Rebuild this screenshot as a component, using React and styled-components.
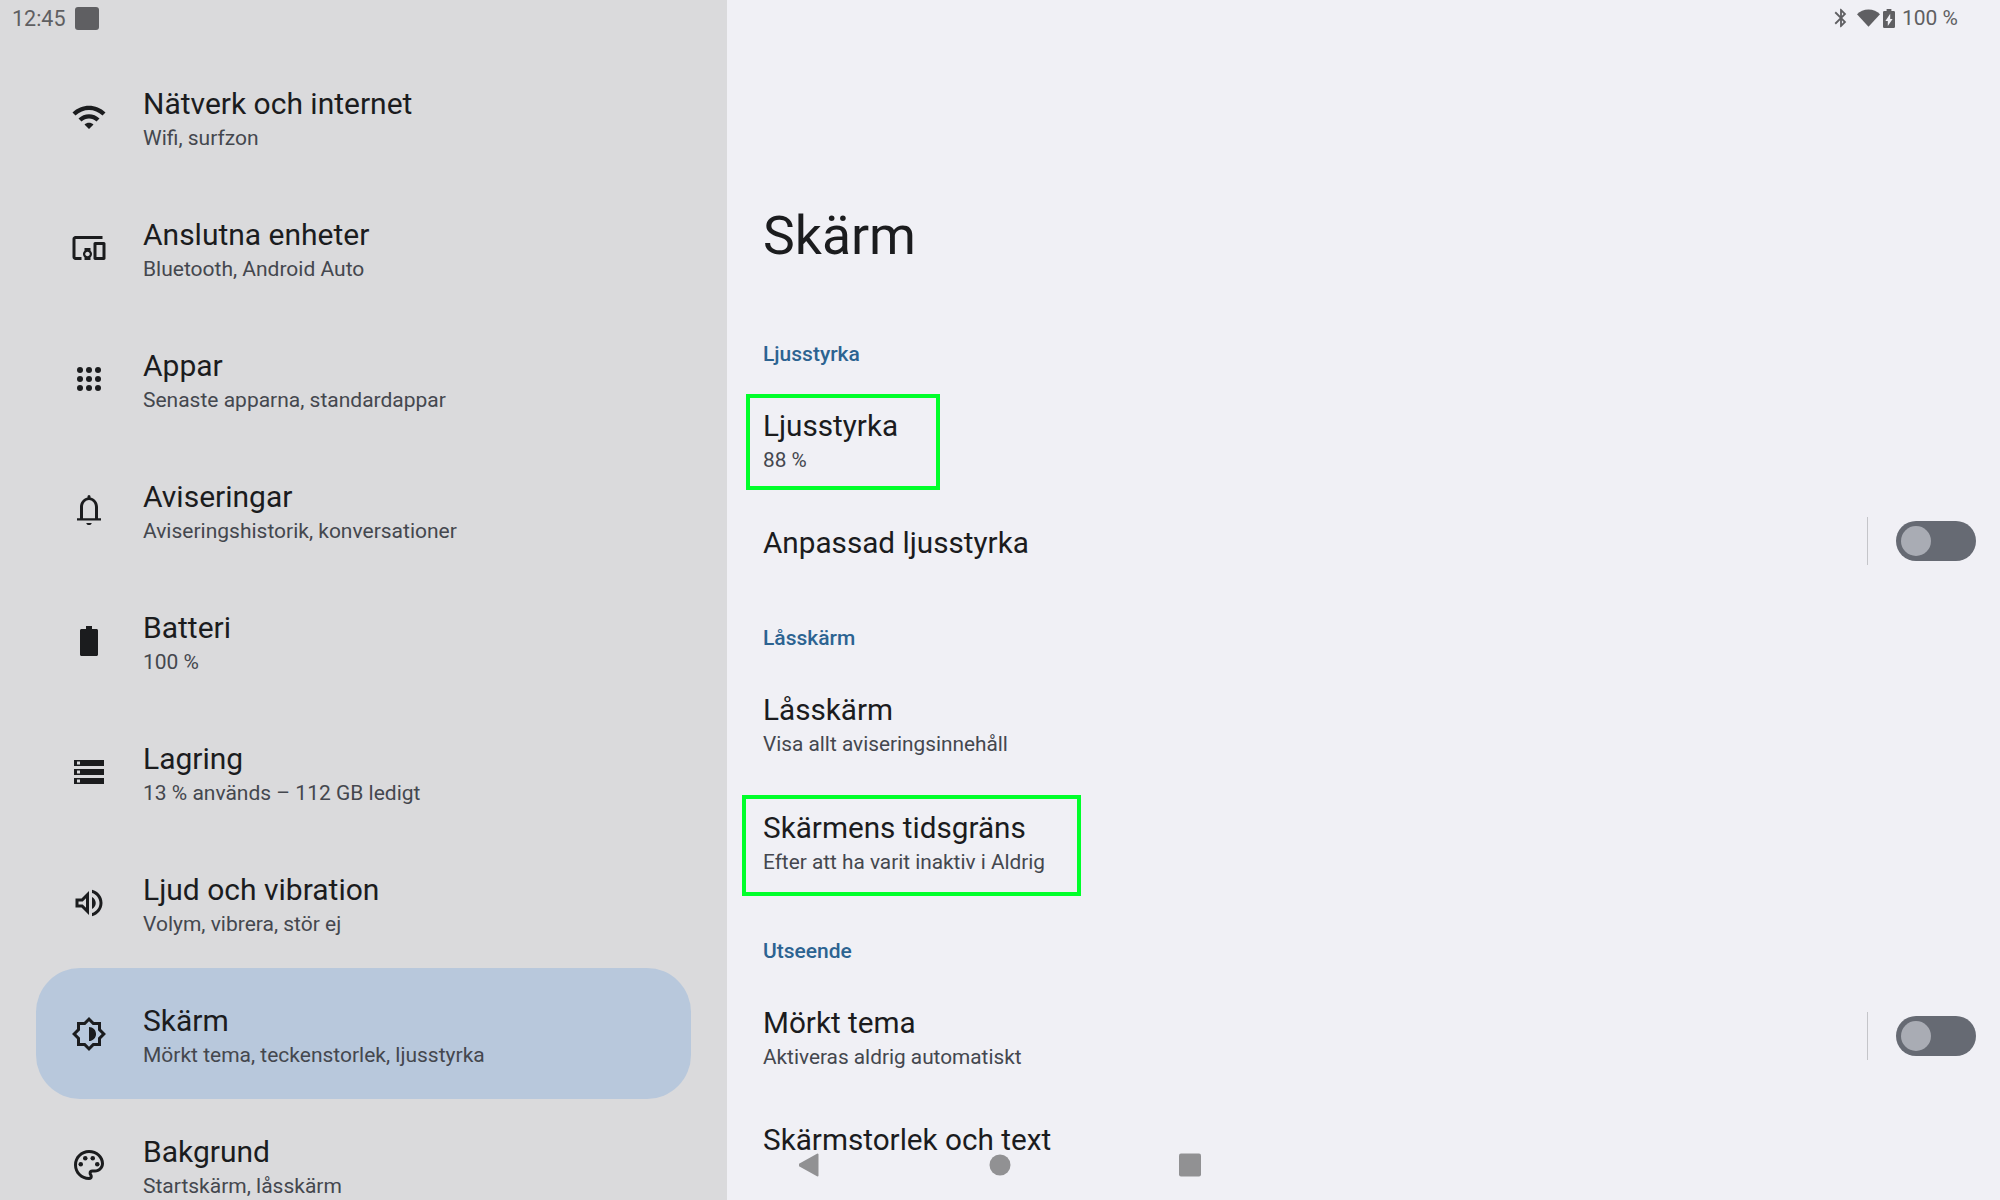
import React from 'react';
import styled, { createGlobalStyle } from 'styled-components';

const GlobalStyle = createGlobalStyle`
  html, body { margin: 0; padding: 0; background: #f0f0f5; }
  body { font-family: Roboto, "Liberation Sans", sans-serif; }
`;

const Screen = styled.div`
  position: relative;
  display: flex;
  width: 2000px;
  height: 1200px;
  overflow: hidden;
`;

const Sidebar = styled.aside`
  display: flex;
  flex-direction: column;
  flex: 0 0 727px;
  height: 1200px;
  overflow: hidden;
  background: #dadadc;
`;

const StatusLeft = styled.div`
  display: flex;
  align-items: center;
  flex: none;
  gap: 9px;
  height: 51px;
  padding: 0 0 15px 12px;
  box-sizing: border-box;
  color: #5f5f62;
  font-size: 21.5px;
`;

const Notch = styled.span`
  width: 24px;
  height: 23px;
  border-radius: 3px;
  background: #5f5f62;
`;

const NavList = styled.nav`
  display: flex;
  flex-direction: column;
  flex: none;
  padding: 0 36px;
`;

const NavItem = styled.div`
  display: flex;
  align-items: center;
  gap: 36px;
  flex: 0 0 131px;
  padding-left: 35px;
  border-radius: 44px;
  background: ${(p) => (p.$active ? '#b8c8dc' : 'transparent')};
`;

const Glyph = styled.svg`
  flex: none;
  width: 36px;
  height: 36px;
  fill: #1b1c1e;
`;

const TextBlock = styled.div`
  display: flex;
  flex-direction: column;
`;

const NavText = styled(TextBlock)`
  padding-top: 2px;
`;

const Title = styled.div`
  color: #1b1c1e;
  font-size: 30px;
  line-height: 41px;
`;

const RowTitle = styled(Title)`
  padding-top: ${(p) => (p.$single ? 3 : 0)}px;
  font-size: 29.7px;
`;

const Sub = styled.div`
  color: #44474e;
  font-size: 21px;
  line-height: 28px;
`;

const RowSub = styled(Sub)`
  font-size: 20.8px;
`;

const Pane = styled.main`
  display: flex;
  flex-direction: column;
  flex: 1;
  height: 1200px;
  overflow: hidden;
  background: #f0f0f5;
`;

const StatusRight = styled.div`
  display: flex;
  align-items: center;
  justify-content: flex-end;
  flex: none;
  height: 36px;
  padding-right: 42px;
  color: #5f5f62;
  font-size: 21px;
`;

const StatusIcon = styled.svg`
  flex: none;
  width: ${(p) => p.$w}px;
  height: ${(p) => p.$h}px;
  margin-right: ${(p) => p.$gap}px;
  fill: #5f5f62;
`;

const PageTitle = styled.h1`
  flex: none;
  margin: 164px 0 0;
  padding-left: 36px;
  color: #1b1c1e;
  font-size: 53.5px;
  font-weight: 400;
  line-height: 72px;
`;

const Section = styled.h2`
  flex: none;
  margin: ${(p) => p.$top}px 0 12px;
  padding-left: 36px;
  color: #2c6391;
  font-size: 21px;
  font-weight: 500;
  line-height: 28px;
`;

const Row = styled.div`
  position: relative;
  display: flex;
  align-items: center;
  justify-content: space-between;
  flex: 0 0 ${(p) => p.$height || 118}px;
  padding: 0 24px 0 36px;
`;

const Highlight = styled.div`
  position: absolute;
  top: ${(p) => p.$top}px;
  left: ${(p) => p.$left}px;
  width: ${(p) => p.$width}px;
  height: ${(p) => p.$height}px;
  box-sizing: border-box;
  border: 4px solid #00ff2a;
`;

const SwitchGroup = styled.div`
  display: flex;
  align-items: center;
  gap: 28px;
`;

const Divider = styled.span`
  width: 1px;
  height: 48px;
  background: #c4c5c9;
`;

const Track = styled.span`
  display: flex;
  align-items: center;
  width: 80px;
  height: 40px;
  padding-left: 5px;
  box-sizing: border-box;
  border-radius: 20px;
  background: #666a73;
`;

const Thumb = styled.span`
  width: 30px;
  height: 30px;
  border-radius: 50%;
  background: #a9acb4;
`;

const NavBar = styled.div`
  position: absolute;
  left: 0;
  right: 0;
  bottom: 23px;
  display: flex;
  justify-content: center;
  gap: 168px;
`;

const NavButton = styled.svg`
  width: 22px;
  height: 24px;
  fill: #919193;
`;

const icons = {
  wifi: <path d="M1 9l2 2c4.97-4.97 13.03-4.97 18 0l2-2C16.93 2.93 7.08 2.93 1 9zm8 8l3 3 3-3c-1.65-1.66-4.34-1.66-6 0zm-4-4l2 2c2.76-2.76 7.24-2.76 10 0l2-2C15.14 9.14 8.87 9.14 5 13z" />,
  devices: <path d="M3 6h18V4H3c-1.1 0-2 .9-2 2v12c0 1.1.9 2 2 2h4v-2H3V6zm10 6H9v1.78c-.61.55-1 1.33-1 2.22s.39 1.67 1 2.22V20h4v-1.78c.61-.55 1-1.34 1-2.22s-.39-1.67-1-2.22V12zm-2 5.5c-.83 0-1.5-.67-1.5-1.5s.67-1.5 1.5-1.5 1.5.67 1.5 1.5-.67 1.5-1.5 1.5zM22 8h-6c-.5 0-1 .5-1 1v10c0 .5.5 1 1 1h6c.5 0 1-.5 1-1V9c0-.5-.5-1-1-1zm-1 10h-4v-8h4v8z" />,
  apps: (
    <>
      {[6, 12, 18].map((y) =>
        [6, 12, 18].map((x) => <circle key={`${x}-${y}`} cx={x} cy={y} r="2" />)
      )}
    </>
  ),
  bell: <path fillRule="evenodd" d="M4 19v-1.5h2V10c0-3.1 2-5.6 5-6.4V3a1 1 0 012 0v.6c3 .8 5 3.3 5 6.4v7.5h2V19H4zm4-1.5h8V10c0-2.5-1.8-4.6-4-4.6S8 7.5 8 10v7.5zm2.2 3.1h3.6c0 .8-.8 1.4-1.8 1.4s-1.8-.6-1.8-1.4z" />,
  battery: <path d="M17 4h-3V2h-4v2H7c-.55 0-1 .45-1 1v16c0 .55.45 1 1 1h10c.55 0 1-.45 1-1V5c0-.55-.45-1-1-1z" />,
  storage: <path d="M2 20h20v-4H2v4zm2-3h2v2H4v-2zM2 4v4h20V4H2zm4 3H4V5h2v2zm-4 7h20v-4H2v4zm2-3h2v2H4v-2z" />,
  volume: <path d="M3 9v6h4l5 5V4L7 9H3zm7-.17v6.34L7.83 13H5v-2h2.83L10 8.83zM16.5 12c0-1.77-1.02-3.29-2.5-4.03v8.05c1.48-.73 2.5-2.25 2.5-4.02zM14 3.23v2.06c2.89.86 5 3.54 5 6.71s-2.11 5.85-5 6.71v2.06c4.01-.91 7-4.49 7-8.77 0-4.28-2.99-7.86-7-8.77z" />,
  display: <path d="M20 15.31L23.31 12 20 8.69V4h-4.69L12 .69 8.69 4H4v4.69L.69 12 4 15.31V20h4.69L12 23.31 15.31 20H20v-4.69zM18 14.48V18h-3.52L12 20.48 9.52 18H6v-3.52L3.52 12 6 9.52V6h3.52L12 3.52 14.48 6H18v3.52L20.48 12 18 14.48zM12 7.3v9.4c2.6 0 4.7-2.1 4.7-4.7S14.6 7.3 12 7.3z" />,
  palette: (
    <>
      <path d="M12 22C6.49 22 2 17.51 2 12S6.49 2 12 2s10 4.04 10 9c0 3.31-2.69 6-6 6h-1.77c-.28 0-.5.22-.5.5 0 .12.05.23.13.33.41.47.64 1.06.64 1.67A2.5 2.5 0 0 1 12 22zm0-18c-4.41 0-8 3.59-8 8s3.59 8 8 8c.28 0 .5-.22.5-.5a.54.54 0 0 0-.14-.35c-.41-.46-.63-1.05-.63-1.65a2.5 2.5 0 0 1 2.5-2.5H16c2.21 0 4-1.79 4-4 0-3.86-3.59-7-8-7z" />
      <circle cx="6.5" cy="11.5" r="1.5" />
      <circle cx="9.5" cy="7.5" r="1.5" />
      <circle cx="14.5" cy="7.5" r="1.5" />
      <circle cx="17.5" cy="11.5" r="1.5" />
    </>
  ),
};

const navItems = [
  { icon: 'wifi', title: 'Nätverk och internet', sub: 'Wifi, surfzon' },
  { icon: 'devices', title: 'Anslutna enheter', sub: 'Bluetooth, Android Auto' },
  { icon: 'apps', title: 'Appar', sub: 'Senaste apparna, standardappar' },
  { icon: 'bell', title: 'Aviseringar', sub: 'Aviseringshistorik, konversationer' },
  { icon: 'battery', title: 'Batteri', sub: '100 %' },
  { icon: 'storage', title: 'Lagring', sub: '13 % används – 112 GB ledigt' },
  { icon: 'volume', title: 'Ljud och vibration', sub: 'Volym, vibrera, stör ej' },
  { icon: 'display', title: 'Skärm', sub: 'Mörkt tema, teckenstorlek, ljusstyrka', active: true },
  { icon: 'palette', title: 'Bakgrund', sub: 'Startskärm, låsskärm' },
];

const Toggle = () => (
  <SwitchGroup>
    <Divider />
    <Track>
      <Thumb />
    </Track>
  </SwitchGroup>
);

const App = () => (
  <Screen>
    <GlobalStyle />
    <Sidebar>
      <StatusLeft>
        12:45
        <Notch />
      </StatusLeft>
      <NavList>
        {navItems.map((item) => (
          <NavItem key={item.title} $active={item.active}>
            <Glyph viewBox="0 0 24 24">{icons[item.icon]}</Glyph>
            <NavText>
              <Title>{item.title}</Title>
              <Sub>{item.sub}</Sub>
            </NavText>
          </NavItem>
        ))}
      </NavList>
    </Sidebar>

    <Pane>
      <StatusRight>
        <StatusIcon $w={22} $h={22} $gap={5} viewBox="0 0 24 24">
          <path d="M17.71 7.71L12 2h-1v7.59L6.41 5 5 6.41 10.59 12 5 17.59 6.41 19 11 14.41V22h1l5.71-5.71-4.3-4.29 4.3-4.29zM13 5.83l1.88 1.88L13 9.59V5.83zm1.88 10.46L13 18.17v-3.76l1.88 1.88z" />
        </StatusIcon>
        <StatusIcon $w={23} $h={18} $gap={3} viewBox="0 0 24 18">
          <path d="M12 18L0 5C3 2 7.3 0 12 0s9 2 12 5z" />
        </StatusIcon>
        <StatusIcon $w={12} $h={19} $gap={7} viewBox="7 2 10 20" preserveAspectRatio="none">
          <path d="M15.67 4H14V2h-4v2H8.33C7.6 4 7 4.6 7 5.33v15.33C7 21.4 7.6 22 8.33 22h7.33c.74 0 1.34-.6 1.34-1.33V5.33C17 4.6 16.4 4 15.67 4zM11 20v-5.5H9L13 7v5.5h2L11 20z" />
        </StatusIcon>
        100 %
      </StatusRight>

      <PageTitle>Skärm</PageTitle>

      <Section $top={68}>Ljusstyrka</Section>
      <Row>
        <Highlight $top={14} $left={19} $width={194} $height={96} />
        <TextBlock>
          <RowTitle>Ljusstyrka</RowTitle>
          <RowSub>88 %</RowSub>
        </TextBlock>
      </Row>
      <Row $height={86}>
        <RowTitle $single>Anpassad ljusstyrka</RowTitle>
        <Toggle />
      </Row>

      <Section $top={40}>Låsskärm</Section>
      <Row>
        <TextBlock>
          <RowTitle>Låsskärm</RowTitle>
          <RowSub>Visa allt aviseringsinnehåll</RowSub>
        </TextBlock>
      </Row>
      <Row>
        <Highlight $top={13} $left={15} $width={339} $height={101} />
        <TextBlock>
          <RowTitle>Skärmens tidsgräns</RowTitle>
          <RowSub>Efter att ha varit inaktiv i Aldrig</RowSub>
        </TextBlock>
      </Row>

      <Section $top={37}>Utseende</Section>
      <Row>
        <TextBlock>
          <RowTitle>Mörkt tema</RowTitle>
          <RowSub>Aktiveras aldrig automatiskt</RowSub>
        </TextBlock>
        <Toggle />
      </Row>
      <Row $height={86}>
        <RowTitle $single>Skärmstorlek och text</RowTitle>
      </Row>
    </Pane>

    <NavBar>
      <NavButton viewBox="0 0 22 24">
        <path d="M18.5 1.5v21L0 12z" stroke="#919193" strokeWidth="2" strokeLinejoin="round" />
      </NavButton>
      <NavButton viewBox="0 0 22 24">
        <circle cx="11" cy="12" r="10.5" />
      </NavButton>
      <NavButton viewBox="0 0 22 24">
        <rect x="0" y="0.5" width="22" height="23" rx="2" />
      </NavButton>
    </NavBar>
  </Screen>
);

export default App;
